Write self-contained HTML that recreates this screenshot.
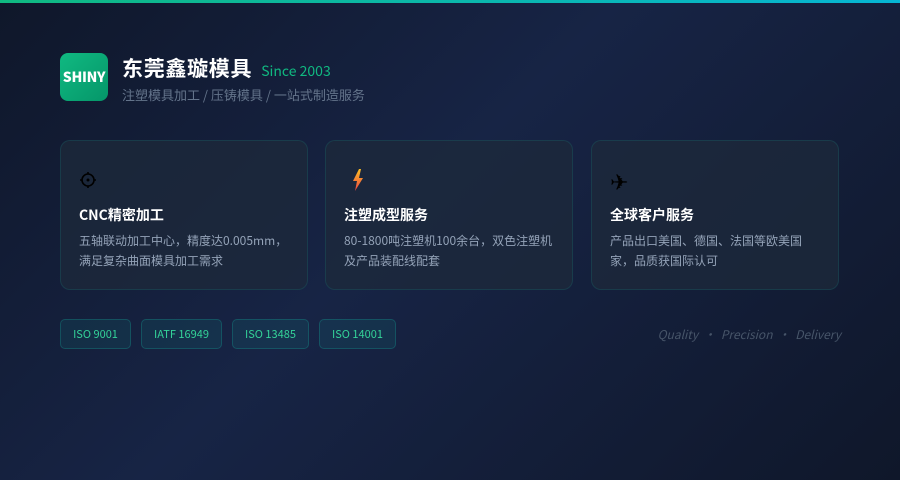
<!DOCTYPE html>
<html><head><meta charset="utf-8"><style>
*{margin:0;padding:0;box-sizing:border-box}
body{width:900px;height:480px;overflow:hidden;font-family:"Noto Sans CJK SC",sans-serif;background:linear-gradient(135deg,#0f172a 0%,#172445 45%,#0f172a 100%);position:relative}
.top{position:absolute;left:0;top:0;width:900px;height:3px;background:linear-gradient(90deg,#10b981,#06b6d4)}
.logo{position:absolute;left:60px;top:53px;width:48px;height:48px;border-radius:8px;background:linear-gradient(135deg,#10b981,#059669);color:#fff;font-weight:900;font-size:14px;display:flex;align-items:center;justify-content:center;letter-spacing:-0.3px}
.t1{position:absolute;left:122px;top:53px;color:#fff;font-size:21px;font-weight:bold;line-height:30px;letter-spacing:0.7px}
.t1 span{font-size:14px;font-weight:normal;color:#10b981;margin-left:9px;letter-spacing:0}
.t2{position:absolute;left:122px;top:85px;color:#64748b;font-size:13px}
.card{position:absolute;top:140px;width:248px;height:150px;border:1px solid rgba(20,184,166,0.15);border-radius:10px;background:rgba(30,41,59,0.75)}
.card .ic{position:absolute;left:18px;top:28px;font-size:20px;line-height:24px}
.card h3{position:absolute;left:18px;top:64px;color:#fff;font-size:14px;font-weight:bold}
.card p{position:absolute;left:18px;top:90px;width:214px;color:#94a3b8;font-size:12px;line-height:20px}
.tag{position:absolute;top:319px;height:30px;border:1px solid rgba(20,184,166,0.25);background:rgba(20,184,166,0.1);border-radius:5px;color:#34d399;font-size:11px;line-height:28px;text-align:center}
.q{position:absolute;right:59px;top:326px;color:#475569;font-style:italic;font-size:12px}
</style></head><body>
<div class="top"></div>
<div class="logo">SHINY</div>
<div class="t1">东莞鑫璇模具<span>Since 2003</span></div>
<div class="t2">注塑模具加工 / 压铸模具 / 一站式制造服务</div>
<div class="card" style="left:60px"><div class="ic"><svg width="18" height="18" viewBox="0 0 18 18"><circle cx="9" cy="9" r="6" fill="none" stroke="#000" stroke-width="1.6"/><circle cx="9" cy="9" r="1.5" fill="#000"/><path d="M9 1v2M9 15v2M1 9h2M15 9h2" stroke="#000" stroke-width="1.6"/></svg></div><h3>CNC精密加工</h3><p>五轴联动加工中心，精度达0.005mm，满足复杂曲面模具加工需求</p></div>
<div class="card" style="left:325px"><div class="ic" style="left:26px"><svg width="12" height="22" viewBox="0 0 12 22"><defs><linearGradient id="g" x1="0" y1="0" x2="0" y2="1"><stop offset="0" stop-color="#fbbf24"/><stop offset="1" stop-color="#ef4444"/></linearGradient></defs><path d="M7 0L1 12h4l-2 10 8-13H7l2-9z" fill="url(#g)"/></svg></div><h3>注塑成型服务</h3><p>80-1800吨注塑机100余台，双色注塑机及产品装配线配套</p></div>
<div class="card" style="left:591px"><div class="ic" style="font-size:22px;color:#000">✈</div><h3>全球客户服务</h3><p style="width:200px">产品出口美国、德国、法国等欧美国家，品质获国际认可</p></div>
<div class="tag" style="left:60px;width:71px">ISO 9001</div>
<div class="tag" style="left:141px;width:81px">IATF 16949</div>
<div class="tag" style="left:232px;width:77px">ISO 13485</div>
<div class="tag" style="left:319px;width:77px">ISO 14001</div>
<div class="q">Quality &nbsp;•&nbsp; Precision &nbsp;•&nbsp; Delivery</div>
</body></html>
